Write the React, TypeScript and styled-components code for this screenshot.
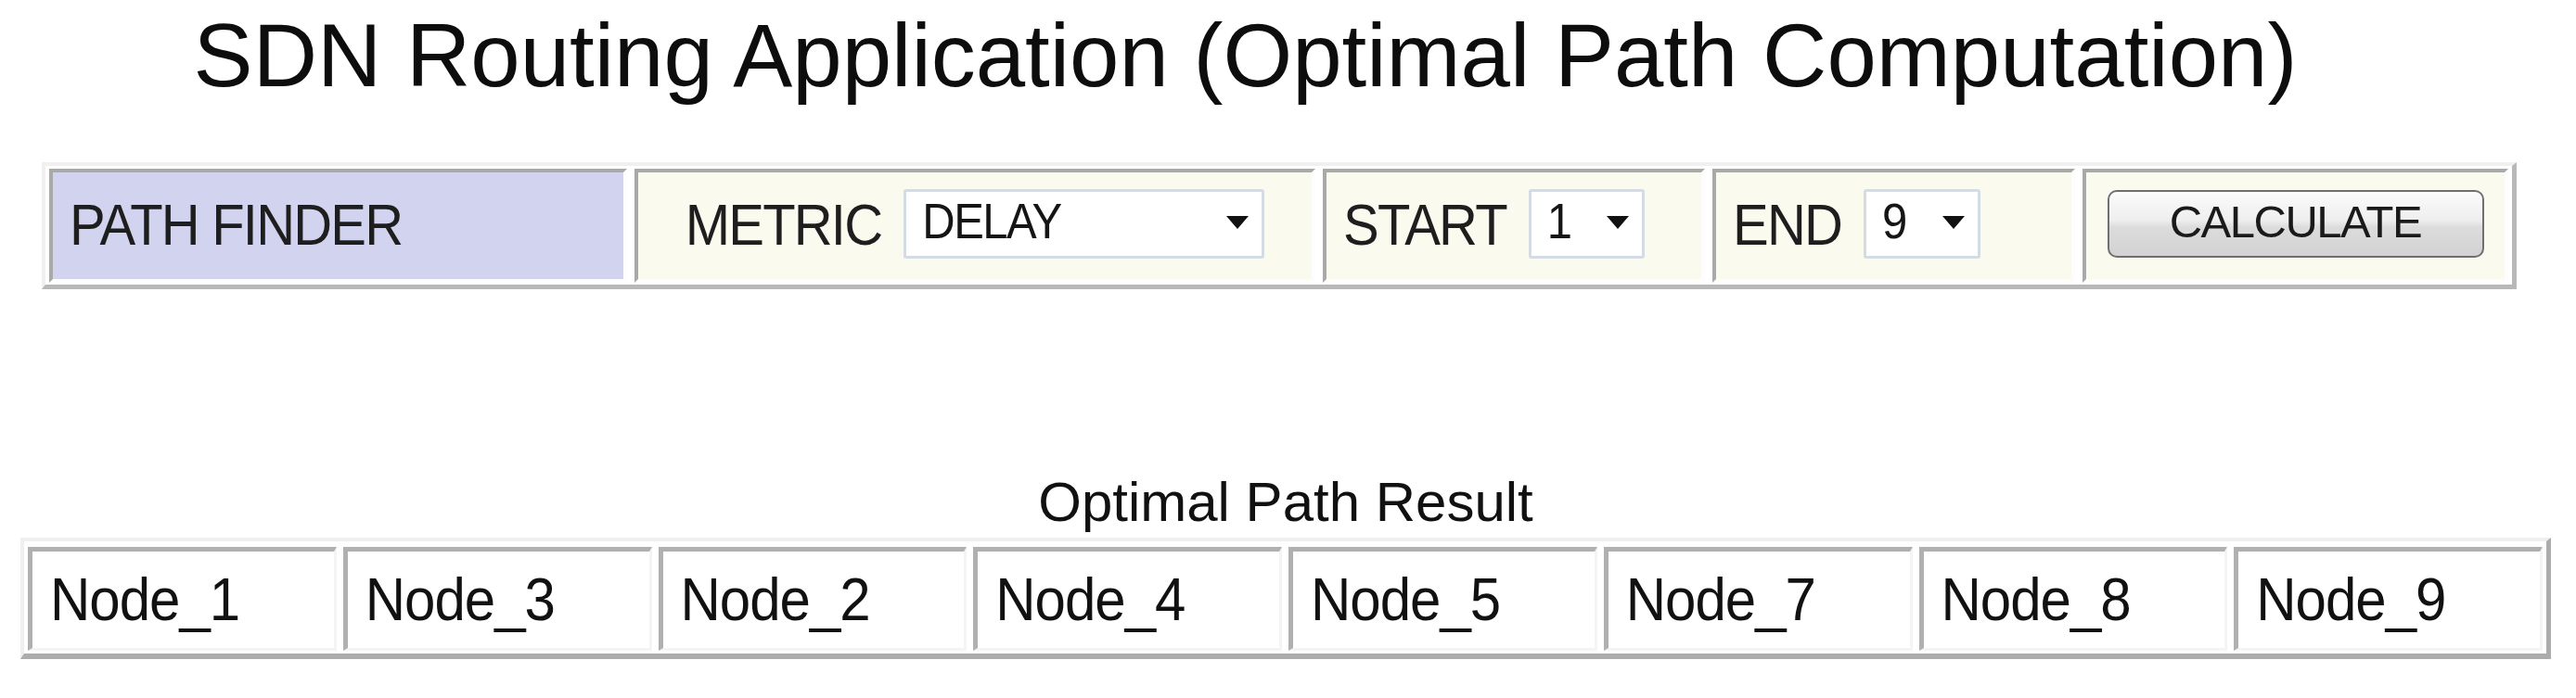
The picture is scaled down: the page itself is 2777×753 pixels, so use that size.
import React from 'react'
import styled, { createGlobalStyle } from 'styled-components'

const GlobalStyle = createGlobalStyle`
    body {
        margin: 0;
        background: #ffffff;
        font-family: "Liberation Sans", Arial, sans-serif;
        color: #111111;
    }
`

type CellPropsType = {
    $width: number
    $bg?: string
    $center?: boolean
}

type SelectPropsType = {
    $width: number
}

const path = ['Node_1', 'Node_3', 'Node_2', 'Node_4', 'Node_5', 'Node_7', 'Node_8', 'Node_9']

const Arrow = () => (
    <svg width="24" height="14" viewBox="0 0 24 14">
        <polygon points="0,0 24,0 12,14" fill="#111" />
    </svg>
)

const Dropdown = (props: { value: string; width: number }) => {
    return (
        <Select $width={props.width}>
            <SelectValue>{props.value}</SelectValue>
            <Arrow />
        </Select>
    )
}

export default function App() {
    return (
        <Page>
            <GlobalStyle />
            <Title>SDN Routing Application (Optimal Path Computation)</Title>

            <Toolbar>
                <Cell $width={623} $bg={'#d2d3ef'}>
                    <Label>PATH FINDER</Label>
                </Cell>
                <Cell $width={734} $center>
                    <Label>METRIC</Label>
                    <Dropdown value="DELAY" width={389} />
                </Cell>
                <Cell $width={412}>
                    <Label>START</Label>
                    <Dropdown value="1" width={125} />
                </Cell>
                <Cell $width={391}>
                    <Label>END</Label>
                    <Dropdown value="9" width={126} />
                </Cell>
                <Cell $width={459} $center>
                    <Button>CALCULATE</Button>
                </Cell>
            </Toolbar>

            <Result>
                <ResultTitle>Optimal Path Result</ResultTitle>
                <ResultTable>
                    {path.map((node) => (
                        <NodeCell key={node}>
                            <NodeName>{node}</NodeName>
                        </NodeCell>
                    ))}
                </ResultTable>
            </Result>
        </Page>
    )
}

const Page = styled.div`
    width: 2777px;
    padding-top: 12px;
`

const Title = styled.h1`
    margin: 0;
    padding-right: 92px;
    text-align: center;
    font-size: 96px;
    line-height: 95px;
    font-weight: 400;
    color: #0d0d0d;
`

const Toolbar = styled.div`
    display: flex;
    gap: 8px;
    box-sizing: border-box;
    width: 2668px;
    height: 137px;
    margin: 68px 0 0 45px;
    padding: 3px 4px 2px 4px;
    border-style: solid;
    border-width: 4px 5px 5px 4px;
    border-color: #f0f0f0 #b8b8b8 #b8b8b8 #f0f0f0;
`

const Cell = styled.div<CellPropsType>`
    display: flex;
    align-items: center;
    justify-content: ${(p) => (p.$center ? 'center' : 'flex-start')};
    gap: 24px;
    box-sizing: border-box;
    width: ${(p) => p.$width}px;
    height: 100%;
    padding: 0 ${(p) => (p.$center ? 0 : 18)}px 4px;
    background: ${(p) => p.$bg || '#fafaee'};
    border-style: solid;
    border-width: 4px;
    border-color: #a9a9a9 #fdfdfd #fdfdfd #a9a9a9;
`

const Label = styled.span`
    display: inline-block;
    font-size: 58px;
    line-height: 1;
    letter-spacing: -1.8px;
    color: #1e1e1e;
    white-space: nowrap;
    transform: scaleY(1.08);
`

const Select = styled.div<SelectPropsType>`
    display: flex;
    align-items: center;
    justify-content: space-between;
    box-sizing: border-box;
    width: ${(p) => p.$width}px;
    height: 75px;
    padding: 0 14px 4px 17px;
    background: #ffffff;
    border: 3px solid #d5dbe3;
    border-radius: 3px;
`

const SelectValue = styled.span`
    display: inline-block;
    font-size: 49px;
    line-height: 1;
    letter-spacing: -1.5px;
    color: #151515;
    transform: scaleY(1.08);
`

const Button = styled.button`
    box-sizing: border-box;
    width: 406px;
    height: 73px;
    padding: 0 0 6px;
    font-family: "Liberation Sans", Arial, sans-serif;
    font-size: 49px;
    letter-spacing: -1.5px;
    color: #1a1a1a;
    border: 2px solid #6f6f6f;
    border-radius: 10px;
    background: linear-gradient(#fbfbfb 0%, #eeeeee 45%, #dcdcdc 55%, #d2d2d2 100%);
    box-shadow: inset 0 2px 0 #ffffff;
`

const Result = styled.div`
    width: 2728px;
    margin: 200px 0 0 22px;
`

const ResultTitle = styled.div`
    text-align: center;
    font-size: 60px;
    line-height: 60px;
    color: #111111;
`

const ResultTable = styled.div`
    display: flex;
    gap: 7px;
    box-sizing: border-box;
    margin-top: 8px;
    padding: 6px 4px 3px 4px;
    border-style: solid;
    border-width: 4px 5px 6px 4px;
    border-color: #efefef #acacac #acacac #efefef;
`

const NodeCell = styled.div`
    flex: 1;
    display: flex;
    align-items: center;
    box-sizing: border-box;
    height: 112px;
    padding-left: 19px;
    background: #ffffff;
    border-style: solid;
    border-width: 5px 3px 3px 5px;
    border-color: #b0b0b0 #f4f4f4 #f4f4f4 #b0b0b0;
`

const NodeName = styled.span`
    display: inline-block;
    font-size: 60px;
    line-height: 1;
    letter-spacing: -1px;
    color: #111111;
    transform: scaleY(1.09);
`
